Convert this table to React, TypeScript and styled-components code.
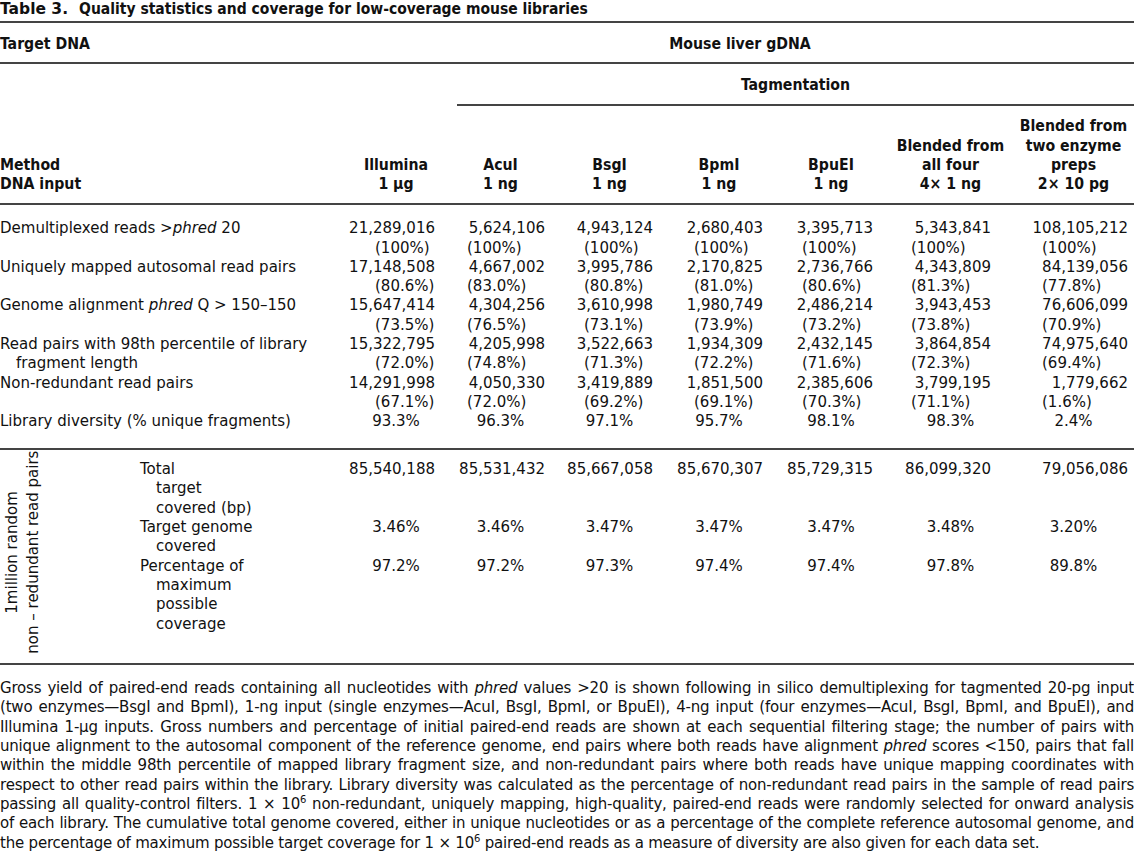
import React from 'react';
import styled, { createGlobalStyle } from 'styled-components';

const GlobalStyle = createGlobalStyle`
  html, body { margin: 0; padding: 0; background: #fff; }
`;

const TAIL = '100px 109px 109px 110px 114px 125px 121px';
const COLS = `346px ${TAIL}`;
const BOTTOM_COLS = `206px ${TAIL}`;
const HEAD_FONT = '"DejaVu Sans Condensed", "DejaVu Sans", sans-serif';

// right padding of the figure line and left padding of the percentage line, per data column
const cols = [
  { pr: 11, pl: 29 },
  { pr: 10, pl: 21 },
  { pr: 11, pl: 29 },
  { pr: 11, pl: 30 },
  { pr: 15, pl: 28 },
  { pr: 22, pl: 23 },
  { pr: 6, pl: 29 },
];

const headers: string[][] = [
  ['Illumina', '1 μg'],
  ['AcuI', '1 ng'],
  ['BsgI', '1 ng'],
  ['BpmI', '1 ng'],
  ['BpuEI', '1 ng'],
  ['Blended from', 'all four', '4× 1 ng'],
  ['Blended from', 'two enzyme', 'preps', '2× 10 pg'],
];

type Row = { label: React.ReactNode; vals: string[][] };

const rows: Row[] = [
  {
    label: <>Demultiplexed reads &gt;<i>phred</i> 20</>,
    vals: [
      ['21,289,016', '(100%)'], ['5,624,106', '(100%)'], ['4,943,124', '(100%)'], ['2,680,403', '(100%)'],
      ['3,395,713', '(100%)'], ['5,343,841', '(100%)'], ['108,105,212', '(100%)'],
    ],
  },
  {
    label: 'Uniquely mapped autosomal read pairs',
    vals: [
      ['17,148,508', '(80.6%)'], ['4,667,002', '(83.0%)'], ['3,995,786', '(80.8%)'], ['2,170,825', '(81.0%)'],
      ['2,736,766', '(80.6%)'], ['4,343,809', '(81.3%)'], ['84,139,056', '(77.8%)'],
    ],
  },
  {
    label: <>Genome alignment <i>phred</i> Q &gt; 150–150</>,
    vals: [
      ['15,647,414', '(73.5%)'], ['4,304,256', '(76.5%)'], ['3,610,998', '(73.1%)'], ['1,980,749', '(73.9%)'],
      ['2,486,214', '(73.2%)'], ['3,943,453', '(73.8%)'], ['76,606,099', '(70.9%)'],
    ],
  },
  {
    label: 'Read pairs with 98th percentile of library fragment length',
    vals: [
      ['15,322,795', '(72.0%)'], ['4,205,998', '(74.8%)'], ['3,522,663', '(71.3%)'], ['1,934,309', '(72.2%)'],
      ['2,432,145', '(71.6%)'], ['3,864,854', '(72.3%)'], ['74,975,640', '(69.4%)'],
    ],
  },
  {
    label: 'Non-redundant read pairs',
    vals: [
      ['14,291,998', '(67.1%)'], ['4,050,330', '(72.0%)'], ['3,419,889', '(69.2%)'], ['1,851,500', '(69.1%)'],
      ['2,385,606', '(70.3%)'], ['3,799,195', '(71.1%)'], ['1,779,662', '(1.6%)'],
    ],
  },
];

const diversity = ['93.3%', '96.3%', '97.1%', '95.7%', '98.1%', '98.3%', '2.4%'];

const totalCovered = ['85,540,188', '85,531,432', '85,667,058', '85,670,307', '85,729,315', '86,099,320', '79,056,086'];
const genomeCovered = ['3.46%', '3.46%', '3.47%', '3.47%', '3.47%', '3.48%', '3.20%'];
const maxCoverage = ['97.2%', '97.2%', '97.3%', '97.4%', '97.4%', '97.8%', '89.8%'];

// the footnote keeps the typeset line breaks of the printed table
const footnote: React.ReactNode[] = [
  <>Gross yield of paired-end reads containing all nucleotides with <i>phred</i> values &gt;20 is shown following in silico demultiplexing for tagmented 20-pg input</>,
  <>(two enzymes—BsgI and BpmI), 1-ng input (single enzymes—AcuI, BsgI, BpmI, or BpuEI), 4-ng input (four enzymes—AcuI, BsgI, BpmI, and BpuEI), and</>,
  <>Illumina 1-μg inputs. Gross numbers and percentage of initial paired-end reads are shown at each sequential filtering stage; the number of pairs with</>,
  <>unique alignment to the autosomal component of the reference genome, end pairs where both reads have alignment <i>phred</i> scores &lt;150, pairs that fall</>,
  <>within the middle 98th percentile of mapped library fragment size, and non-redundant pairs where both reads have unique mapping coordinates with</>,
  <>respect to other read pairs within the library. Library diversity was calculated as the percentage of non-redundant read pairs in the sample of read pairs</>,
  <>passing all quality-control filters. 1 × 10<sup>6</sup> non-redundant, uniquely mapping, high-quality, paired-end reads were randomly selected for onward analysis</>,
  <>of each library. The cumulative total genome covered, either in unique nucleotides or as a percentage of the complete reference autosomal genome, and</>,
  <>the percentage of maximum possible target coverage for 1 × 10<sup>6</sup> paired-end reads as a measure of diversity are also given for each data set.</>,
];

const Page = styled.div`
  width: 1134px;
  font-family: "DejaVu Sans", "Noto Sans", sans-serif;
  font-size: 15px;
  line-height: 19.3px;
  color: #111;
`;

const Title = styled.div`
  font-family: ${HEAD_FONT};
  font-weight: 700;
  font-size: 15.5px;
  line-height: 19px;
  padding-bottom: 2px;
  border-bottom: 2px solid #444;
  white-space: nowrap;
`;

const TitleNum = styled.span`
  font-family: "DejaVu Sans", sans-serif;
  margin-right: 11px;
`;

const SpanRow = styled.div`
  display: grid;
  grid-template-columns: ${COLS};
  font-family: ${HEAD_FONT};
  font-size: 15.7px;
  font-weight: 700;
  padding: 10.5px 0 9.2px;
  border-bottom: 2px solid #444;
`;

const SpanHead = styled.div<{ $from: number }>`
  grid-column: ${(p) => p.$from} / -1;
  text-align: center;
`;

const GroupRow = styled.div`
  display: grid;
  grid-template-columns: ${COLS};
  font-family: ${HEAD_FONT};
  font-size: 15.7px;
  font-weight: 700;
`;

const GroupHead = styled.div`
  grid-column: 3 / -1;
  margin-left: 11px;
  padding: 11px 0 9.7px;
  text-align: center;
  border-bottom: 2px solid #444;
`;

const ColumnHeads = styled.div`
  display: grid;
  grid-template-columns: ${COLS};
  font-family: ${HEAD_FONT};
  font-size: 15.7px;
  font-weight: 700;
  padding: 10.4px 0 9.4px;
  border-bottom: 2px solid #444;
`;

const HeadCell = styled.div<{ $center?: boolean }>`
  align-self: end;
  text-align: ${(p) => (p.$center ? 'center' : 'left')};
  white-space: nowrap;
`;

const Body = styled.div`
  padding: 14.3px 0 16.7px;
  border-bottom: 2px solid #444;
`;

const DataRow = styled.div`
  display: grid;
  grid-template-columns: ${COLS};
`;

const Stub = styled.div`
  padding-left: 16px;
  text-indent: -16px;
`;

const Figure = styled.div<{ $pr: number }>`
  text-align: right;
  padding-right: ${(p) => p.$pr}px;
  white-space: nowrap;
`;

const Percent = styled.div<{ $pl: number }>`
  text-align: left;
  padding-left: ${(p) => p.$pl}px;
  white-space: nowrap;
`;

const Centered = styled.div`
  text-align: center;
  white-space: nowrap;
`;

const Bottom = styled.div`
  display: flex;
  border-bottom: 2px solid #444;
`;

const Side = styled.div`
  width: 140px;
  flex: none;
  display: flex;
  padding: 0 0 8px 2px;
  box-sizing: border-box;
`;

const Rotated = styled.div`
  writing-mode: vertical-rl;
  transform: rotate(180deg);
  text-align: center;
  line-height: 21px;
  white-space: nowrap;
`;

const BottomGrid = styled.div`
  flex: 1;
  display: grid;
  grid-template-columns: ${BOTTOM_COLS};
  align-content: start;
  padding: 10px 0 29px;
`;

const StubLine = styled.div<{ $indent?: boolean }>`
  padding-left: ${(p) => (p.$indent ? 16 : 0)}px;
  white-space: nowrap;
`;

const Caption = styled.div`
  margin-top: 14.3px;
  letter-spacing: -0.2px;

  sup {
    font-size: 10px;
    line-height: 0;
  }
`;

const CaptionLine = styled.div<{ $last?: boolean }>`
  text-align: ${(p) => (p.$last ? 'left' : 'justify')};
  text-align-last: ${(p) => (p.$last ? 'left' : 'justify')};
`;

const StubLines = ({ lines }: { lines: string[] }) => (
  <div>
    {lines.map((l, i) => (
      <StubLine key={l} $indent={i > 0}>{l}</StubLine>
    ))}
  </div>
);

const App = () => (
  <Page>
    <GlobalStyle />
    <Title>
      <TitleNum>Table 3.</TitleNum>Quality statistics and coverage for low-coverage mouse libraries
    </Title>

    <SpanRow>
      <div>Target DNA</div>
      <SpanHead $from={2}>Mouse liver gDNA</SpanHead>
    </SpanRow>

    <GroupRow>
      <GroupHead>Tagmentation</GroupHead>
    </GroupRow>

    <ColumnHeads>
      <HeadCell>Method<br />DNA input</HeadCell>
      {headers.map((h, i) => (
        <HeadCell key={i} $center>
          {h.map((line, j) => (
            <div key={j}>{line}</div>
          ))}
        </HeadCell>
      ))}
    </ColumnHeads>

    <Body>
      {rows.map((r, i) => (
        <DataRow key={i}>
          <Stub>{r.label}</Stub>
          {r.vals.map(([n, pct], j) => (
            <div key={j}>
              <Figure $pr={cols[j].pr}>{n}</Figure>
              <Percent $pl={cols[j].pl}>{pct}</Percent>
            </div>
          ))}
        </DataRow>
      ))}
      <DataRow>
        <Stub>Library diversity (% unique fragments)</Stub>
        {diversity.map((d, j) => (
          <Centered key={j}>{d}</Centered>
        ))}
      </DataRow>
    </Body>

    <Bottom>
      <Side>
        <Rotated>
          1million random
          <br />
          non – redundant read pairs
        </Rotated>
      </Side>
      <BottomGrid>
        <StubLines lines={['Total', 'target', 'covered (bp)']} />
        {totalCovered.map((v, j) => (
          <Figure key={j} $pr={cols[j].pr}>{v}</Figure>
        ))}
        <StubLines lines={['Target genome', 'covered']} />
        {genomeCovered.map((v, j) => (
          <Centered key={j}>{v}</Centered>
        ))}
        <StubLines lines={['Percentage of', 'maximum', 'possible', 'coverage']} />
        {maxCoverage.map((v, j) => (
          <Centered key={j}>{v}</Centered>
        ))}
      </BottomGrid>
    </Bottom>

    <Caption>
      {footnote.map((line, i) => (
        <CaptionLine key={i} $last={i === footnote.length - 1}>{line}</CaptionLine>
      ))}
    </Caption>
  </Page>
);

export default App;
